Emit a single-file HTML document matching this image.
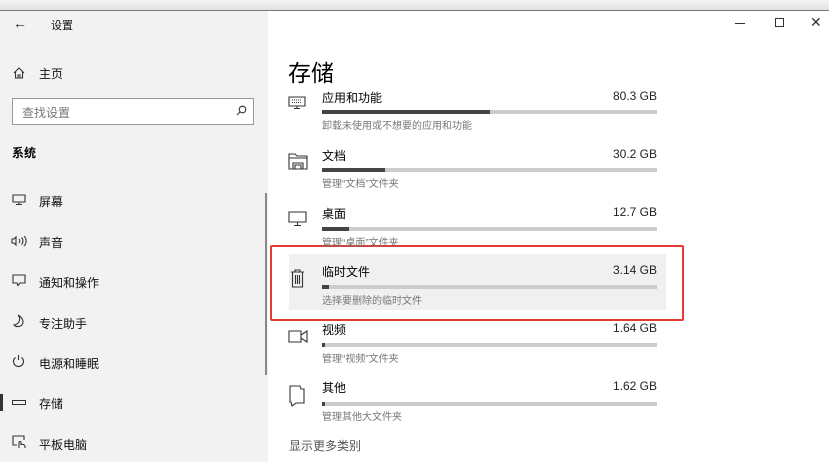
<!DOCTYPE html>
<html><head><meta charset="utf-8"><style>
*{margin:0;padding:0;box-sizing:border-box}
body{width:829px;height:462px;overflow:hidden;background:#fff;font-family:"Liberation Sans","Noto Sans CJK SC",sans-serif;color:#000;position:relative}
.a{position:absolute;white-space:nowrap}
.side{position:absolute;left:0;top:11px;width:268px;height:451px;background:#f2f2f2}
.nav{font-size:12px;color:#111}
.t{font-size:12px;color:#000}
.g{font-size:10px;color:#777}
.sz{font-size:12px;color:#222;text-align:right;width:80px}
.bar{position:absolute;left:322px;width:335px;height:4px;background:#ccc}
.bar i{display:block;height:4px;background:#444}
svg{position:absolute;fill:none;stroke:#333;stroke-width:1.1}
</style></head><body>
<div class="a" style="left:0;top:0;width:829px;height:10px;background:linear-gradient(#f4f4f4,#e2e2e2)"></div>
<div class="a" style="left:0;top:10px;width:829px;height:1px;background:#777"></div>
<div class="side"></div>
<div class="a" style="left:13px;top:15px;font-size:14px;color:#222">&#8592;</div>
<div class="a nav" style="left:51px;top:17px;font-size:11px">设置</div>
<div class="a" style="left:735px;top:23px;width:10px;height:1px;background:#333"></div>
<div class="a" style="left:775px;top:18px;width:9px;height:9px;border:1px solid #333"></div>
<div class="a" style="left:810px;top:14px;font-size:14px;color:#333">&#10005;</div>
<svg style="left:13px;top:67px" width="12" height="12" viewBox="0 0 12 12"><path d="M1 6L6 1L11 6M2.5 4.5V11H9.5V4.5M5 11V8H7V11"/></svg>
<div class="a nav" style="left:39px;top:65px">主页</div>
<div class="a" style="left:12px;top:98px;width:242px;height:27px;border:1px solid #999;background:#fff"></div>
<div class="a" style="left:22px;top:104px;font-size:12px;color:#777">查找设置</div>
<svg style="left:236px;top:105px" width="11" height="11" viewBox="0 0 11 11"><circle cx="6.5" cy="4.5" r="3.3"/><path d="M4 7L1 10"/></svg>
<div class="a" style="left:12px;top:144px;font-size:12px;font-weight:bold">系统</div>
<div class="a" style="left:265px;top:193px;width:2px;height:182px;background:#888"></div>
<svg style="left:12px;top:194px" width="14" height="12" viewBox="0 0 14 12"><path d="M1 1H13V8H1ZM7 8V10M4 10.5H10"/></svg>
<div class="a nav" style="left:39px;top:193px">屏幕</div>
<svg style="left:11px;top:235px" width="16" height="12" viewBox="0 0 16 12"><path d="M1 4H3L5 2V10L3 8H1ZM8 4A3 3 0 0 1 8 8M10.5 2.5A5 5 0 0 1 10.5 9.5M13 1A7 7 0 0 1 13 11"/></svg>
<div class="a nav" style="left:39px;top:234px">声音</div>
<svg style="left:12px;top:274px" width="14" height="13" viewBox="0 0 14 13"><path d="M1 1H13V9H8L6 11.5L5 9H1Z"/></svg>
<div class="a nav" style="left:39px;top:274px">通知和操作</div>
<svg style="left:12px;top:314px" width="12" height="14" viewBox="0 0 12 14"><path d="M6 1C9 4 8 10 2 11C4 13.5 9 13 10.5 10C12 7 10 3 6 1Z"/></svg>
<div class="a nav" style="left:39px;top:315px">专注助手</div>
<svg style="left:12px;top:354px" width="13" height="14" viewBox="0 0 13 14"><path d="M6.5 1V6M3.5 3.5A5 5 0 1 0 9.5 3.5"/></svg>
<div class="a nav" style="left:39px;top:355px">电源和睡眠</div>
<div class="a" style="left:0;top:394px;width:3px;height:17px;background:#333"></div>
<div class="a" style="left:12px;top:400px;width:14px;height:5px;border:1px solid #333"></div>
<div class="a nav" style="left:39px;top:395px">存储</div>
<svg style="left:12px;top:435px" width="14" height="14" viewBox="0 0 14 14"><path d="M5 10H1V1H12V5M7 13V7.5A1 1 0 0 1 9 7.5V9.5H11A2 2 0 0 1 13 11.5V13"/></svg>
<div class="a nav" style="left:39px;top:436px">平板电脑</div>

<div class="a" style="left:288px;top:54px;font-size:23px;color:#000">存储</div>

<div class="a" style="left:289px;top:254px;width:377px;height:56px;background:#f0f0f0"></div>
<div class="a" style="left:270px;top:245px;width:414px;height:76px;border:2px solid #e53935;border-radius:2px"></div>

<svg style="left:288px;top:96px" width="18" height="14" viewBox="0 0 18 14"><path d="M1 1H17V10H1ZM9 10V12M6 12.5H12"/><path d="M4 4H14M4 6.5H14" stroke-dasharray="1 1"/></svg>
<div class="a t" style="left:322px;top:89px">应用和功能</div>
<div class="a sz" style="left:577px;top:89px">80.3 GB</div>
<div class="bar" style="top:110px"><i style="width:168px"></i></div>
<div class="a g" style="left:322px;top:117px">卸载未使用或不想要的应用和功能</div>

<svg style="left:288px;top:152px" width="20" height="18" viewBox="0 0 20 18"><path d="M1 17V2H7L9 4H19V17ZM1 6H19M5 17V11H15V17M7 17V13H13V17"/></svg>
<div class="a t" style="left:322px;top:147px">文档</div>
<div class="a sz" style="left:577px;top:147px">30.2 GB</div>
<div class="bar" style="top:168px"><i style="width:63px"></i></div>
<div class="a g" style="left:322px;top:175px">管理“文档”文件夹</div>

<svg style="left:288px;top:211px" width="19" height="16" viewBox="0 0 19 16"><path d="M1 1H18V11H1ZM9.5 11V14M6 14.5H13"/></svg>
<div class="a t" style="left:322px;top:205px">桌面</div>
<div class="a sz" style="left:577px;top:205px">12.7 GB</div>
<div class="bar" style="top:227px"><i style="width:27px"></i></div>
<div class="a g" style="left:322px;top:234px">管理“桌面”文件夹</div>

<svg style="left:290px;top:268px" width="15" height="20" viewBox="0 0 15 20"><path d="M1 4H14M5 4V2H10V4M2.5 4V19H12.5V4M5.5 7V16M7.5 7V16M9.5 7V16"/></svg>
<div class="a t" style="left:322px;top:263px">临时文件</div>
<div class="a sz" style="left:577px;top:263px">3.14 GB</div>
<div class="bar" style="top:285px"><i style="width:7px"></i></div>
<div class="a g" style="left:322px;top:292px">选择要删除的临时文件</div>

<svg style="left:288px;top:330px" width="20" height="13" viewBox="0 0 20 13"><path d="M1 1H13V12H1ZM13 5L19 1V12L13 8"/></svg>
<div class="a t" style="left:322px;top:321px">视频</div>
<div class="a sz" style="left:577px;top:321px">1.64 GB</div>
<div class="bar" style="top:343px"><i style="width:3px"></i></div>
<div class="a g" style="left:322px;top:350px">管理“视频”文件夹</div>

<svg style="left:288px;top:385px" width="18" height="22" viewBox="0 0 18 22"><path d="M2 1H12L13 4H16V18H8L4 21L3 17H2Z"/></svg>
<div class="a t" style="left:322px;top:379px">其他</div>
<div class="a sz" style="left:577px;top:379px">1.62 GB</div>
<div class="bar" style="top:402px"><i style="width:3px"></i></div>
<div class="a g" style="left:322px;top:408px">管理其他大文件夹</div>

<div class="a" style="left:289px;top:437px;font-size:12px;color:#555">显示更多类别</div>
</body></html>
